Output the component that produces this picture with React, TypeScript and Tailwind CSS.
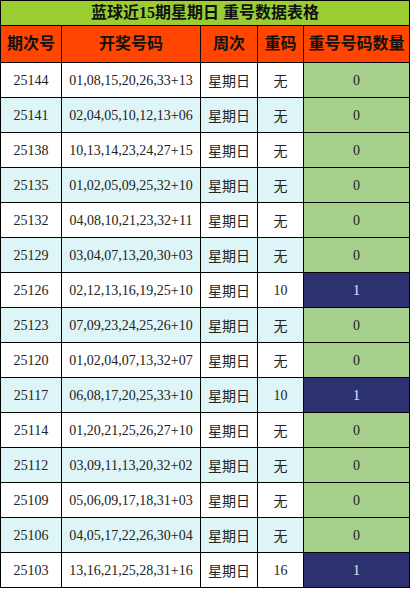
type Row = {
  issue: string;
  numbers: string;
  repeat: string;
  count: number;
};

const rows: Row[] = [
  { issue: "25144", numbers: "01,08,15,20,26,33+13", repeat: "无", count: 0 },
  { issue: "25141", numbers: "02,04,05,10,12,13+06", repeat: "无", count: 0 },
  { issue: "25138", numbers: "10,13,14,23,24,27+15", repeat: "无", count: 0 },
  { issue: "25135", numbers: "01,02,05,09,25,32+10", repeat: "无", count: 0 },
  { issue: "25132", numbers: "04,08,10,21,23,32+11", repeat: "无", count: 0 },
  { issue: "25129", numbers: "03,04,07,13,20,30+03", repeat: "无", count: 0 },
  { issue: "25126", numbers: "02,12,13,16,19,25+10", repeat: "10", count: 1 },
  { issue: "25123", numbers: "07,09,23,24,25,26+10", repeat: "无", count: 0 },
  { issue: "25120", numbers: "01,02,04,07,13,32+07", repeat: "无", count: 0 },
  { issue: "25117", numbers: "06,08,17,20,25,33+10", repeat: "10", count: 1 },
  { issue: "25114", numbers: "01,20,21,25,26,27+10", repeat: "无", count: 0 },
  { issue: "25112", numbers: "03,09,11,13,20,32+02", repeat: "无", count: 0 },
  { issue: "25109", numbers: "05,06,09,17,18,31+03", repeat: "无", count: 0 },
  { issue: "25106", numbers: "04,05,17,22,26,30+04", repeat: "无", count: 0 },
  { issue: "25103", numbers: "13,16,21,25,28,31+16", repeat: "16", count: 1 },
];

const headers = ["期次号", "开奖号码", "周次", "重码", "重号号码数量"];

const font = "font-['Liberation_Serif','Noto_Sans_CJK_SC',serif]";

export default function App() {
  return (
    <div className={`w-[410px] bg-white ${font}`}>
      <div className="grid grid-cols-[60px_138px_56px_45px_105px] gap-px bg-black p-px">
        <div className="col-span-5 flex h-[24px] items-center justify-center bg-[#9acd32] text-[16px] font-bold text-[#111]">
          蓝球近15期星期日 重号数据表格
        </div>
        {headers.map((h) => (
          <div
            key={h}
            className="flex h-[36px] items-center justify-center bg-[#ff4500] text-[16px] font-bold text-[#111]"
          >
            {h}
          </div>
        ))}
        {rows.map((row, i) => {
          const bg = i % 2 === 0 ? "bg-white" : "bg-[#def5f7]";
          const hit = row.count > 0;
          return [
            <div key={`${row.issue}-a`} className={`flex h-[34px] items-center justify-center text-[14px] text-[#222] ${bg}`}>
              {row.issue}
            </div>,
            <div key={`${row.issue}-b`} className={`flex h-[34px] items-center justify-center text-[14px] text-[#222] ${bg}`}>
              {row.numbers}
            </div>,
            <div key={`${row.issue}-c`} className={`flex h-[34px] items-center justify-center pt-[2px] text-[14px] text-[#222] ${bg}`}>
              星期日
            </div>,
            <div key={`${row.issue}-d`} className={`flex h-[34px] items-center justify-center text-[14px] text-[#222] ${bg} ${row.repeat === "无" ? "pt-[2px]" : ""}`}>
              {row.repeat}
            </div>,
            <div
              key={`${row.issue}-e`}
              className={`flex h-[34px] items-center justify-center text-[14px] ${
                hit ? "bg-[#2e3170] text-[#e8e8f0]" : "bg-[#a8d08d] text-[#222]"
              }`}
            >
              {row.count}
            </div>,
          ];
        })}
      </div>
    </div>
  );
}
